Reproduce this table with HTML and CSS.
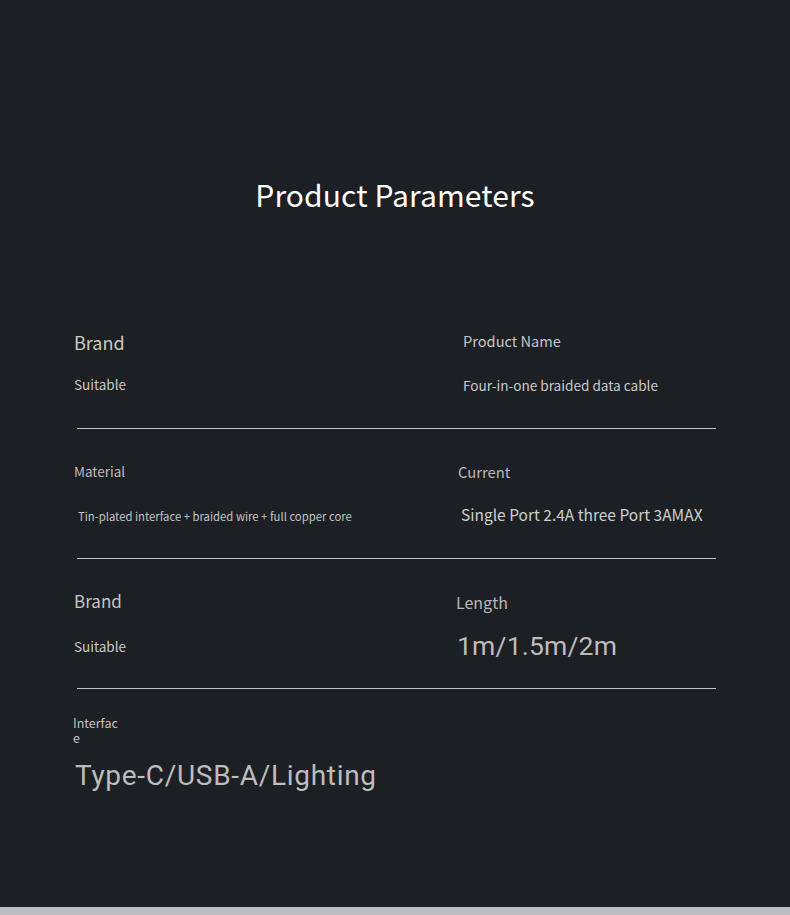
FILE: index.html
```html
<!DOCTYPE html>
<html lang="en">
<head>
<meta charset="utf-8">
<title>Product Parameters</title>
<link rel="stylesheet" href="styles.css">
</head>
<body>
<main class="page">
  <h1 class="title">Product Parameters</h1>
  <section class="params">
    <div class="row">
      <div class="cell">
        <div class="brand">Brand</div>
        <div class="suitable s1">Suitable</div>
      </div>
      <div class="cell right">
        <div class="pname">Product Name</div>
        <div class="pval">Four-in-one braided data cable</div>
      </div>
    </div>
    <div class="divider"></div>
    <div class="row">
      <div class="cell">
        <div class="material">Material</div>
        <div class="matval">Tin-plated interface + braided wire + full copper core</div>
      </div>
      <div class="cell right">
        <div class="current">Current</div>
        <div class="curval">Single Port 2.4A three Port 3AMAX</div>
      </div>
    </div>
    <div class="divider"></div>
    <div class="row">
      <div class="cell">
        <div class="brand b3">Brand</div>
        <div class="suitable s3">Suitable</div>
      </div>
      <div class="cell right">
        <div class="length">Length</div>
        <div class="lenval">1m/1.5m/2m</div>
      </div>
    </div>
    <div class="divider"></div>
    <div class="iface">
      <div class="iflabel">Interface</div>
      <div class="ifval">Type-C/USB-A/Lighting</div>
    </div>
  </section>
</main>
<footer class="strip"></footer>
</body>
</html>
```
FILE: styles.css
```css
html, body {
  margin: 0;
  padding: 0;
}
body {
  background: #1c1f23;
  font-family: "Noto Sans CJK SC", "Noto Sans", sans-serif;
  color: #c6c6c6;
  width: 790px;
}
.page {
  height: 907px;
  overflow: hidden;
}
.title {
  margin: 0;
  padding-top: 174px;
  font-size: 30px;
  line-height: 40px;
  font-weight: 400;
  color: #ffffff;
  text-align: center;
  letter-spacing: 0.1px;
}
.params {
  margin-top: 117px;
  padding-left: 74px;
}
.row {
  display: grid;
  grid-template-columns: 382px 1fr;
  height: 97px;
}
.divider + .row {
  margin-top: 32px;
}
.divider {
  width: 639px;
  height: 1px;
  margin-left: 3px;
  background: #c4c4c4;
}
.cell {
  display: flex;
  flex-direction: column;
  align-items: flex-start;
}
.brand {
  font-size: 18px;
  line-height: 24px;
  color: #cdcabe;
  margin-top: -1px;
}
.suitable {
  font-size: 13.5px;
  line-height: 20px;
  color: #c8c8c8;
  margin-top: 20px;
}
.b3 {
  font-size: 17px;
  margin-top: -2px;
  color: #c4c4c4;
}
.s3 {
  margin-top: 23px;
}
.pname {
  margin-left: 7px;
  font-size: 14.6px;
  line-height: 20px;
  color: #c4c4c4;
}
.pval {
  margin-left: 7px;
  margin-top: 24px;
  font-size: 13.6px;
  line-height: 20px;
  color: #cacaca;
}
.material {
  font-size: 13.5px;
  line-height: 20px;
  color: #bdbdbd;
}
.matval {
  margin-left: 4px;
  margin-top: 27px;
  font-size: 11.3px;
  line-height: 16px;
  color: #c4c4c4;
}
.current {
  margin-left: 2px;
  margin-top: 1px;
  font-size: 14.8px;
  line-height: 20px;
  color: #b8b8b8;
}
.curval {
  margin-left: 5px;
  margin-top: 22px;
  font-size: 15.5px;
  line-height: 20px;
  color: #cfcfcf;
}
.length {
  margin-top: 1px;
  font-size: 16px;
  line-height: 20px;
  color: #b8b8b8;
}
.lenval {
  margin-left: 1px;
  margin-top: 18px;
  font-family: Roboto, "Noto Sans", sans-serif;
  font-size: 26.5px;
  line-height: 32px;
  color: #bcbcbc;
  letter-spacing: 0.2px;
}
.iface {
  margin-top: 26px;
  margin-left: -1px;
}
.iflabel {
  width: 47px;
  font-size: 12.5px;
  line-height: 15px;
  color: #c4c4c4;
  word-break: break-all;
}
.ifval {
  margin-left: 2px;
  margin-top: 14px;
  font-family: Roboto, "Noto Sans", sans-serif;
  font-size: 28px;
  line-height: 34px;
  color: #bdbdbd;
  letter-spacing: 0.7px;
}
.strip {
  height: 8px;
  background: #bebdc2;
}
```
